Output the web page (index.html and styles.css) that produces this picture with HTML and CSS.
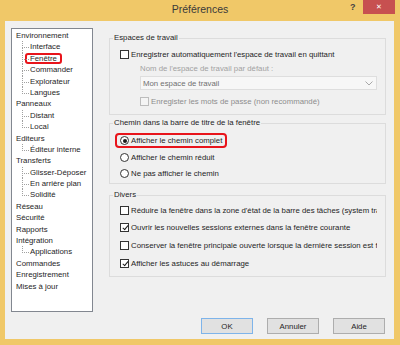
FILE: index.html
```html
<!DOCTYPE html>
<html lang="fr">
<head>
  <meta charset="UTF-8">
  <title>Préférences</title>
  <link rel="stylesheet" href="styles.css">
</head>
<body>

  <div class="window">
    <div class="titlebar">
      <div class="title">Préférences</div>
      <div class="help">?</div>
      <div class="close">&#x2715;</div>
    </div>

    <div class="client">
      <div class="main">

        <!-- Arbre des catégories -->
        <ul class="tree">
          <li class="node">Environnement</li>
          <li class="node child">Interface</li>
          <li class="node child"><span class="marked">Fenêtre</span></li>
          <li class="node child">Commander</li>
          <li class="node child">Explorateur</li>
          <li class="node child last">Langues</li>
          <li class="node">Panneaux</li>
          <li class="node child">Distant</li>
          <li class="node child last">Local</li>
          <li class="node">Editeurs</li>
          <li class="node child last">Éditeur interne</li>
          <li class="node">Transferts</li>
          <li class="node child">Glisser-Déposer</li>
          <li class="node child">En arrière plan</li>
          <li class="node child last">Solidité</li>
          <li class="node">Réseau</li>
          <li class="node">Sécurité</li>
          <li class="node">Rapports</li>
          <li class="node">Intégration</li>
          <li class="node child last">Applications</li>
          <li class="node">Commandes</li>
          <li class="node">Enregistrement</li>
          <li class="node">Mises à jour</li>
        </ul>

        <div class="pages">
          <fieldset class="group group-work">
            <legend>Espaces de travail</legend>
            <div class="row"><span class="check"></span>Enregistrer automatiquement l'espace de travail en quittant</div>
            <div class="indent">
              <div class="row muted">Nom de l'espace de travail par défaut :</div>
              <div class="combo">
                <span>Mon espace de travail</span>
                <svg width="8" height="5" viewBox="0 0 8 5"><path d="M0.5 0.5 L4 4 L7.5 0.5" fill="none" stroke="#a8a8a8" stroke-width="1"/></svg>
              </div>
              <div class="row disabled"><span class="check"></span>Enregister les mots de passe (non recommandé)</div>
            </div>
          </fieldset>

          <fieldset class="group group-path">
            <legend>Chemin dans la barre de titre de la fenêtre</legend>
            <div class="row marked-row"><span class="radio on"></span>Afficher le chemin complet</div>
            <div class="row"><span class="radio"></span>Afficher le chemin réduit</div>
            <div class="row"><span class="radio"></span>Ne pas afficher le chemin</div>
          </fieldset>

          <fieldset class="group group-misc">
            <legend>Divers</legend>
            <div class="row"><span class="check"></span>Réduire la fenêtre dans la zone d'état de la barre des tâches (system tray)</div>
            <div class="row"><span class="check on"></span>Ouvrir les nouvelles sessions externes dans la fenêtre courante</div>
            <div class="row"><span class="check"></span>Conserver la fenêtre principale ouverte lorsque la dernière session est fermée</div>
            <div class="row"><span class="check on"></span>Afficher les astuces au démarrage</div>
          </fieldset>
        </div>
      </div>

      <div class="buttons">
        <button class="default">OK</button>
        <button>Annuler</button>
        <button>Aide</button>
      </div>
    </div>
  </div>

</body>
</html>
```

FILE: styles.css
```css
body {
  margin: 0;
  font-family: 'Liberation Sans', Arial, sans-serif;
  font-size: 7.8px;
  color: #1e1e1e;
  background: #f0c868;
}
.window {
  width: 400px;
  height: 345px;
  display: flex;
  flex-direction: column;
  overflow: hidden;
}

/* Barre de titre */
.titlebar {
  height: 21px;
  display: flex;
  align-items: flex-start;
  position: relative;
}
.title {
  position: absolute;
  left: 0;
  right: 0;
  top: 3px;
  text-align: center;
  font-size: 10.5px;
  color: #3a3a3a;
}
.help {
  margin-left: auto;
  margin-top: 2px;
  width: 10px;
  font-size: 9px;
  font-weight: bold;
  color: #444;
}
.close {
  width: 32px;
  height: 14px;
  margin: 0 5px 0 3px;
  background: #c75050;
  color: white;
  font-size: 7px;
  line-height: 14px;
  text-align: center;
}

/* Zone client */
.client {
  flex: 1;
  margin: 0 6px 6px 5px;
  background: #f0f0f0;
  padding: 7px 8px 5px 6px;
  display: flex;
  flex-direction: column;
}
.main {
  display: flex;
  gap: 16px;
  height: 284px;
}

.tree {
  flex: none;
  list-style: none;
  margin: 0;
  width: 82px;
  box-sizing: border-box;
  border: 1px solid #828790;
  background: white;
  padding: 1px 0 0 4px;
}
.node {
  line-height: 11.4px;
  height: 11.4px;
  white-space: nowrap;
}
.child {
  position: relative;
  margin-left: 6px;
  padding-left: 8px;
}
.child::before {
  content: "";
  position: absolute;
  left: 0;
  top: 0;
  width: 6px;
  height: 6px;
  border-left: 1px dotted #a0a0a0;
  border-bottom: 1px dotted #a0a0a0;
}
.child::after {
  content: "";
  position: absolute;
  left: 0;
  top: 6px;
  bottom: 0;
  border-left: 1px dotted #a0a0a0;
}
.child.last::after {
  display: none;
}
.marked {
  display: inline-block;
  margin-left: -5px;
  padding: 0 3px;
  height: 11px;
  line-height: 8px;
  border: 2px solid #e8141b;
  border-radius: 3px;
  box-sizing: border-box;
}

/* Pages de droite */
.pages {
  flex: 1;
  min-width: 0;
  display: flex;
  flex-direction: column;
}
.group {
  margin: 0;
  border: 1px solid #dcdcdc;
  padding: 3px 8px 6px 10px;
  min-width: 0;
  overflow: hidden;
}
.group legend {
  padding: 0 1px;
  margin-left: -7px;
  line-height: 12px;
}
.group-work {
  margin-top: 4px;
}
.group-path {
  margin-top: 2px;
  padding-top: 4px;
  padding-bottom: 3px;
}
.group-misc {
  margin-top: 5px;
  padding-top: 2px;
}
.row {
  height: 14px;
  display: flex;
  align-items: center;
  gap: 2px;
  white-space: nowrap;
  overflow: hidden;
}
.group-path .row + .row {
  margin-top: 2px;
}
.group-misc .row + .row {
  margin-top: 3.7px;
}
.marked-row {
  width: fit-content;
  height: 15px;
  box-sizing: border-box;
  margin-left: -5px;
  padding: 0 3px;
  border: 2px solid #e8141b;
  border-radius: 4px;
}
.indent {
  margin-left: 20px;
}
.muted {
  color: #a2a2a2;
}
.disabled {
  color: #8d8d8d;
  margin-top: 4px;
}
.combo {
  height: 14px;
  box-sizing: border-box;
  margin-top: 1px;
  border: 1px solid #dedede;
  background: #f7f7f7;
  color: #707070;
  display: flex;
  align-items: center;
  justify-content: space-between;
  padding: 0 3px 0 2px;
}

/* Cases et boutons radio */
.check, .radio {
  flex: none;
  width: 9px;
  height: 9px;
  box-sizing: border-box;
  border: 1px solid #333;
  background: white;
  position: relative;
}
.radio {
  border-radius: 50%;
}
.radio.on::after {
  content: "";
  position: absolute;
  left: 1.5px;
  top: 1.5px;
  width: 4px;
  height: 4px;
  border-radius: 50%;
  background: #1a1a1a;
}
.check.on::after {
  content: "";
  position: absolute;
  left: 2.5px;
  top: 0px;
  width: 2px;
  height: 5px;
  border: solid #1a1a1a;
  border-width: 0 1.5px 1.5px 0;
  transform: rotate(40deg);
}
.disabled .check {
  border-color: #bcbcbc;
  background: #f4f4f4;
}

/* Boutons */
.buttons {
  margin-top: 6px;
  display: flex;
  justify-content: flex-end;
  gap: 14px;
  padding-right: 1px;
}
button {
  width: 52px;
  height: 16px;
  padding: 0;
  font-family: inherit;
  font-size: 7.8px;
  color: #1e1e1e;
  background: #e1e1e1;
  border: 1px solid #adadad;
}
button.default {
  border-color: #7eb4ea;
}
```
